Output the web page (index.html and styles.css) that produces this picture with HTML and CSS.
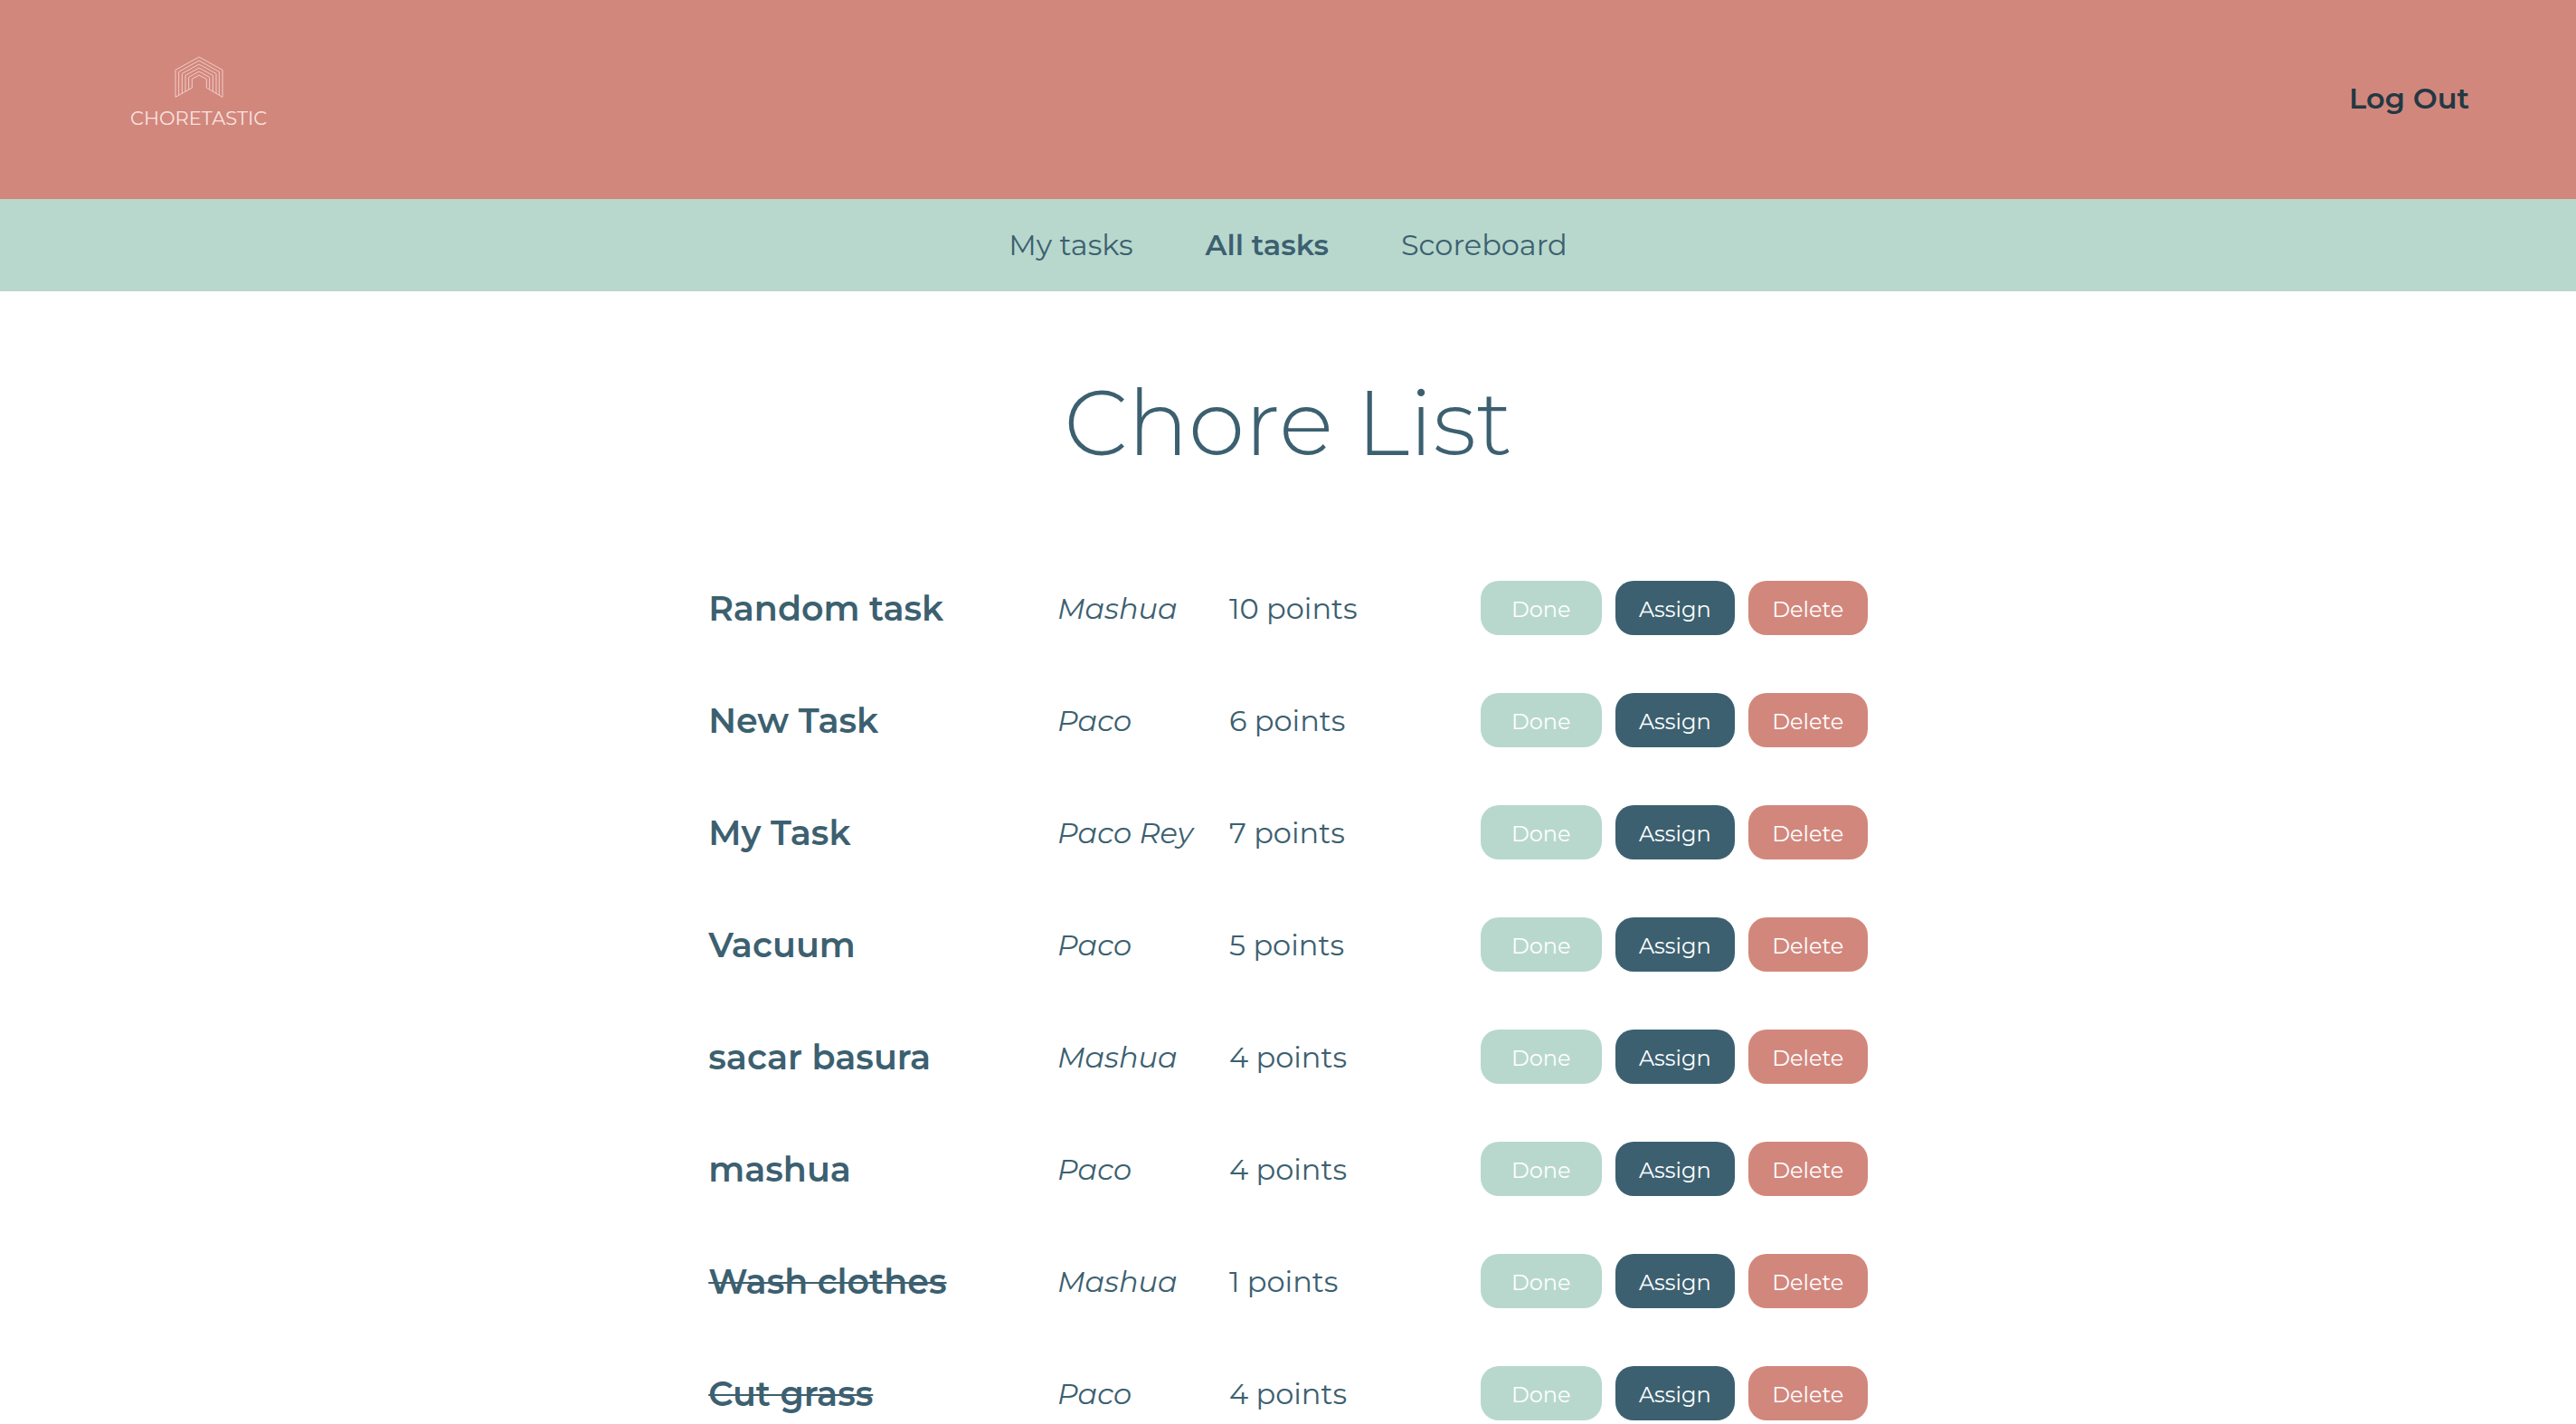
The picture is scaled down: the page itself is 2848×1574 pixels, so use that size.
FILE: index.html
```html
<!DOCTYPE html>
<html lang="en">
<head>
<meta charset="utf-8">
<meta name="viewport" content="width=device-width, initial-scale=1">
<title>Choretastic</title>
<link rel="stylesheet" href="styles.css">
</head>
<body>
<header class="header">
  <a class="logo" href="#">
    <svg class="logo-mark" viewBox="216 64 168 144" aria-hidden="true">
      <path d="M222 203V113L300 70L378 113V203M233 197V119L300 82L367 119V197M244 191V125L300 94L357 125V191M255 185V131L300 106L346 131V185M266 178V137L300 118L335 137V178M277 172V143L300 130L325 143V172M222 203L277 172M325 172L378 203"/>
    </svg>
    <span class="logo-name">CHORETASTIC</span>
  </a>
  <button class="logout" type="button">Log Out</button>
</header>
<nav class="nav">
  <a class="nav-link" href="#">My tasks</a>
  <a class="nav-link nav-link-active" href="#" aria-current="page">All tasks</a>
  <a class="nav-link" href="#">Scoreboard</a>
</nav>
<main class="main">
  <h1 class="title">Chore List</h1>
  <ul class="chores">
    <li class="chore"><strong class="name">Random task</strong><em class="user">Mashua</em><span class="points">10 points</span><div class="actions"><button class="button done" type="button">Done</button><button class="button assign" type="button">Assign</button><button class="button delete" type="button">Delete</button></div></li>
    <li class="chore"><strong class="name">New Task</strong><em class="user">Paco</em><span class="points">6 points</span><div class="actions"><button class="button done" type="button">Done</button><button class="button assign" type="button">Assign</button><button class="button delete" type="button">Delete</button></div></li>
    <li class="chore"><strong class="name">My Task</strong><em class="user">Paco Rey</em><span class="points">7 points</span><div class="actions"><button class="button done" type="button">Done</button><button class="button assign" type="button">Assign</button><button class="button delete" type="button">Delete</button></div></li>
    <li class="chore"><strong class="name">Vacuum</strong><em class="user">Paco</em><span class="points">5 points</span><div class="actions"><button class="button done" type="button">Done</button><button class="button assign" type="button">Assign</button><button class="button delete" type="button">Delete</button></div></li>
    <li class="chore"><strong class="name">sacar basura</strong><em class="user">Mashua</em><span class="points">4 points</span><div class="actions"><button class="button done" type="button">Done</button><button class="button assign" type="button">Assign</button><button class="button delete" type="button">Delete</button></div></li>
    <li class="chore"><strong class="name">mashua</strong><em class="user">Paco</em><span class="points">4 points</span><div class="actions"><button class="button done" type="button">Done</button><button class="button assign" type="button">Assign</button><button class="button delete" type="button">Delete</button></div></li>
    <li class="chore"><strong class="name name-done">Wash clothes</strong><em class="user">Mashua</em><span class="points">1 points</span><div class="actions"><button class="button done" type="button">Done</button><button class="button assign" type="button">Assign</button><button class="button delete" type="button">Delete</button></div></li>
    <li class="chore"><strong class="name name-done">Cut grass</strong><em class="user">Paco</em><span class="points">4 points</span><div class="actions"><button class="button done" type="button">Done</button><button class="button assign" type="button">Assign</button><button class="button delete" type="button">Delete</button></div></li>
  </ul>
</main>
</body>
</html>
```
FILE: styles.css
```css
* {
  box-sizing: border-box;
}

body {
  margin: 0;
  background: #fff;
  color: #3c6070;
  font-family: Montserrat, Inter, sans-serif;
  font-size: 32px;
  font-weight: 400;
  line-height: 40px;
}

button {
  border: 0;
  font-family: inherit;
  cursor: pointer;
}

a {
  color: inherit;
  text-decoration: none;
}

.header {
  display: flex;
  align-items: center;
  justify-content: space-between;
  min-height: 220px;
  padding: 0 118px 2px 144px;
  background: #d2877d;
}

.logo {
  display: flex;
  flex-direction: column;
  align-items: center;
  gap: 10px;
  padding-bottom: 14px;
  color: #f8e4e0;
}

.logo-mark {
  width: 56px;
  height: 48px;
  fill: none;
  stroke: #f0cdc8;
  stroke-width: 3;
}

.logo-name {
  font-size: 21px;
  line-height: 24px;
}

.logout {
  padding: 0;
  background: none;
  color: #223843;
  font-size: 32px;
  font-weight: 600;
  line-height: 40px;
}

.nav {
  display: flex;
  align-items: center;
  justify-content: center;
  gap: 80px;
  min-height: 102px;
  background: #b8d8cd;
}

.nav-link-active {
  font-weight: 600;
}

.main {
  width: 45%;
  margin: 0 auto;
  padding-top: 83px;
}

.title {
  margin: 0 0 113px;
  font-size: 100px;
  font-weight: 300;
  line-height: 124px;
  text-align: center;
}

.chores {
  display: flex;
  flex-direction: column;
  gap: 64px;
  margin: 0;
  padding: 0;
  list-style: none;
}

.chore {
  display: grid;
  grid-template-columns: 386fr 190fr 278fr 428px;
  align-items: center;
}

.name,
.user,
.points {
  padding-top: 2px;
}

.name {
  font-size: 38px;
  font-weight: 600;
}

.name-done {
  text-decoration: line-through;
  text-decoration-thickness: 2px;
}

.actions {
  display: grid;
  grid-template-columns: 134px 132px 132px;
  justify-content: space-between;
}

.button {
  height: 60px;
  padding: 2px 0 0;
  border-radius: 20px;
  color: #fff;
  font-size: 24px;
  font-weight: 400;
}

.done {
  background: #b8d8cd;
}

.assign {
  background: #3c6070;
}

.delete {
  background: #d2877d;
}
```
